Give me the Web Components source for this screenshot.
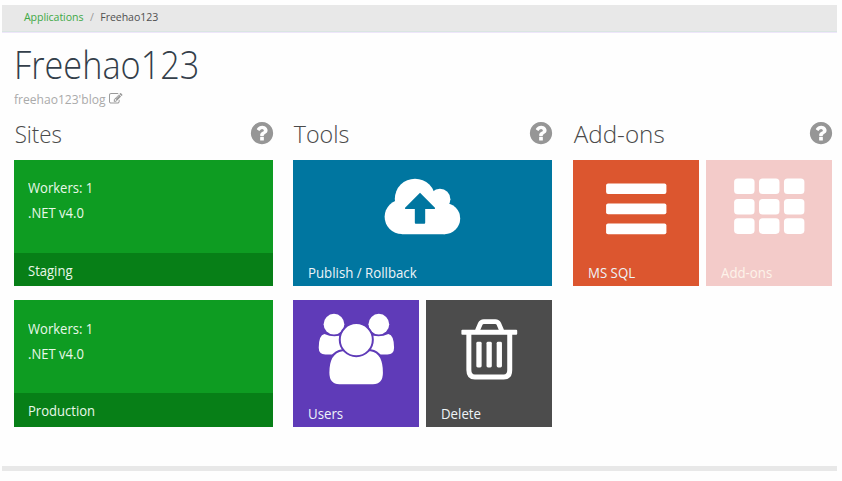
<!DOCTYPE html>
<html lang="en"><head><meta charset="utf-8"><title>Freehao123</title>
<style>
html,body{margin:0;background:#fefefe;overflow:hidden}
body{width:842px;height:481px;font-family:"Open Sans","Noto Sans",sans-serif}
</style></head><body>
<app-page></app-page>
<script>
const define = (name, render) => customElements.define(name, class extends HTMLElement {
  constructor(){ super(); this.attachShadow({mode:'open'}); }
  connectedCallback(){ this.shadowRoot.innerHTML = render(this); }
});

const ICONS = {
  cloud: `<svg viewBox="0 0.5 259 127"><g fill="#fff"><circle cx="108.7" cy="57.5" r="17.2"/><circle cx="122" cy="39.5" r="20.3"/><circle cx="147" cy="39.8" r="10.5"/><circle cx="151.7" cy="59.3" r="15.6"/><path d="M108.7 40h40l3 34.9h-43z"/></g><path d="M127 33.3l15 15.2q.6 1.2-.8 1.2h-9V63.5q0 .9-.9.9h-8.6q-.9 0-.9-.9V49.7h-9q-1.4 0-.8-1.2z" fill="#0076a0"/></svg>`,
  bars: `<svg viewBox="0 0.5 126 127"><g fill="#fff"><rect x="33" y="24" width="60.5" height="10.7" rx="2"/><rect x="33" y="44.2" width="60.5" height="10.7" rx="2"/><rect x="33" y="64.2" width="60.5" height="10.7" rx="2"/></g></svg>`,
  grid: `<svg viewBox="0 0.5 126 127"><g fill="#fff">${[19,39.5,59].map(y=>[28,53,78].map(x=>`<rect x="${x}" y="${y}" width="20.5" height="15.7" rx="3.6"/>`).join('')).join('')}</g></svg>`,
  users: `<svg viewBox="-0.3 0 126 127"><g fill="#fff"><circle cx="40.6" cy="24.3" r="10.4"/><circle cx="85.6" cy="24.3" r="10.4"/><path d="M31 34q10 4.500 20 0l5 10-10 10.600H32q-6.700 0-6.700-6.600 0-13 5.700-14z"/><path d="M95.200 34q-10 4.500-20 0l-5 10 10 10.600h14q6.700 0 6.700-6.600 0-13-5.700-14z"/></g><g fill="#fff" stroke="#5f3bb8" stroke-width="2"><path d="M49 50.500h28.500q13.200 2 13.200 22.500 0 12.500-11 12.500H46q-11 0-11-12.500 0-20.500 14-22.500z"/><circle cx="63" cy="39.8" r="16.600"/></g></svg>`,
  trash: `<svg viewBox="-0.3 -0.3 126 127"><g fill="none" stroke="#fff"><path d="M42.500 33v37q0 7 6 7h29q6 0 6-7V33" stroke-width="5"/><path d="M51 30.500l3-7q1-2.200 3.500-2.200h11.500q2.500 0 3.500 2.200l3 7" stroke-width="4.800"/></g><g fill="#fff"><rect x="35" y="29.500" width="56" height="5" rx="1"/><rect x="50" y="41.500" width="5.300" height="26" rx="1.500"/><rect x="60.200" y="41.500" width="5.300" height="26" rx="1.500"/><rect x="70.400" y="41.500" width="5.300" height="26" rx="1.500"/></g></svg>`
};

define('bread-crumb', () => `<style>
:host{display:flex;align-items:center;box-sizing:border-box;margin-left:2px;width:835px;height:28px;padding:0 0 4px 22px;background:linear-gradient(#e8e8e8 26px,#d9e5e2 26px,#d9e5e2 27px,#eee6fa 27px);font-size:10.6px;color:#505050;white-space:pre}
a{color:#3fa846;letter-spacing:-.08px}i{font-style:normal;color:#999;padding:0 6.500px}span{letter-spacing:-.08px}
</style><a>Applications</a><i>/</i><span>Freehao123</span>`);

define('page-title', () => `<style>
:host{display:block;padding-left:14px}
h1{margin:0;width:max-content;font-weight:300;font-size:38.500px;line-height:52px;color:#333e4a;transform:scaleX(.89);transform-origin:0 0}
p{margin:0;display:flex;align-items:center;font-size:12.800px;line-height:18px;color:#aaa}
p span{width:95px;white-space:nowrap;transform:scaleX(.943);transform-origin:0 0}
svg{width:13.500px;height:13.500px;fill:#999}
</style><h1><slot></slot></h1><p><span><slot name="note"></slot></span><svg viewBox="0 0 1792 1792"><path d="M888 1184l116-116-152-152-116 116v56h96v96h56zm440-720q-16-16-33 1l-350 350q-17 17-1 33t33-1l350-350q17-17 1-33zm80 594v190q0 119-84.500 203.500t-203.500 84.500h-832q-119 0-203.500-84.500t-84.500-203.500v-832q0-119 84.500-203.500t203.500-84.500h832q63 0 117 25 15 7 18 23 3 17-9 29l-49 49q-14 14-32 8-23-6-45-6h-832q-66 0-113 47t-47 113v832q0 66 47 113t113 47h832q66 0 113-47t47-113v-126q0-13 9-22l64-64q15-15 35-7t20 29zm-96-738l288 288-672 672h-288v-288zm444 132l-92 92-288-288 92-92q28-28 68-28t68 28l152 152q28 28 28 68t-28 68z"/></svg></p>`);

define('tile-column', el => `<style>
:host{display:block;width:259px}
header{display:flex;justify-content:space-between;align-items:center;height:38px;margin-bottom:6.600px}
h2{margin:0;padding-left:.7px;font-weight:300;font-size:24px;line-height:38px;color:#4a4a4a;transform:scaleX(${el.getAttribute('squeeze')});transform-origin:0 0}
svg{width:26px;height:26px;fill:#969696;margin-right:-2px}
div{display:flex;flex-wrap:wrap;gap:14px 7px}
</style><header><h2>${el.getAttribute('heading')}</h2><svg viewBox="0 60 1792 1792"><path d="M1024 1376v-192q0-14-9-23t-23-9h-192q-14 0-23 9t-9 23v192q0 14 9 23t23 9h192q14 0 23-9t9-23zm256-672q0-88-55.500-163t-138.500-116-170-41q-243 0-371 213-15 24 8 42l132 100q7 6 19 6 16 0 25-12 53-68 86-92 34-24 86-24 48 0 85.500 26t37.500 59q0 38-20 61t-68 45q-63 28-115.500 86.500t-52.500 125.500v36q0 14 9 23t23 9h192q14 0 23-9t9-23q0-19 21.500-49.500t54.500-49.500q32-18 49-28.500t46-35 44.500-48 28-60.500 12.500-81zm384 192q0 209-103 385.500t-279.500 279.500-385.500 103-385.500-103-279.500-279.500-103-385.500 103-385.500 279.500-279.500 385.500-103 385.500 103 279.500 279.500 103 385.500z"/></svg></header><div><slot></slot></div>`);

define('site-tile', () => `<style>
:host{display:flex;flex-direction:column;box-sizing:border-box;width:259px;height:126.600px;background:#0e9c22;color:#e9f8e9;font-size:13.800px}
section{flex:1;padding:15.600px 14px 0;line-height:25px}
section div,span{display:block;width:max-content;transform:scaleX(.945);transform-origin:0 0}
footer{height:33.500px;line-height:35.500px;padding:0 14px;background:#077f17}
</style><section><div>Workers: 1</div><div>.NET v4.0</div></section><footer><span><slot></slot></span></footer>`);

define('icon-tile', el => `<style>
:host{display:grid;box-sizing:border-box;width:${el.hasAttribute('wide')?259:126}px;height:126.600px;background:${el.getAttribute('color')};color:${el.getAttribute('ink')||'#eef4f8'};font-size:13.800px}
svg,span{grid-area:1/1}svg{width:100%;height:126.600px}
span{align-self:end;width:max-content;margin-left:14.700px;line-height:26px;white-space:nowrap;transform:scaleX(.96);transform-origin:0 0}
</style>${ICONS[el.getAttribute('icon')]}<span><slot></slot></span>`);

define('app-page', () => `<style>
:host{display:flex;flex-direction:column;box-sizing:border-box;width:842px;height:481px;padding-top:5px}
page-title{margin-top:5px}
main{display:flex;gap:20.450px;padding-left:14px;margin-top:7px}
hr{margin:39.200px 0 0 2px;border:0;width:835px;height:5px;background:#e8e8e8}
</style>
<bread-crumb></bread-crumb>
<page-title>Freehao123<span slot="note">freehao123'blog</span></page-title>
<main>
<tile-column heading="Sites" squeeze=".93"><site-tile>Staging</site-tile><site-tile>Production</site-tile></tile-column>
<tile-column heading="Tools" squeeze=".97"><icon-tile wide icon="cloud" color="#0076a0">Publish / Rollback</icon-tile><icon-tile icon="users" color="#5f3bb8">Users</icon-tile><icon-tile icon="trash" color="#4c4c4c">Delete</icon-tile></tile-column>
<tile-column heading="Add-ons" squeeze="1.01"><icon-tile icon="bars" color="#dc562f">MS SQL</icon-tile><icon-tile icon="grid" color="#f3cbc9" ink="#fdf3ea">Add-ons</icon-tile></tile-column>
</main><hr>`);
</script></body></html>
